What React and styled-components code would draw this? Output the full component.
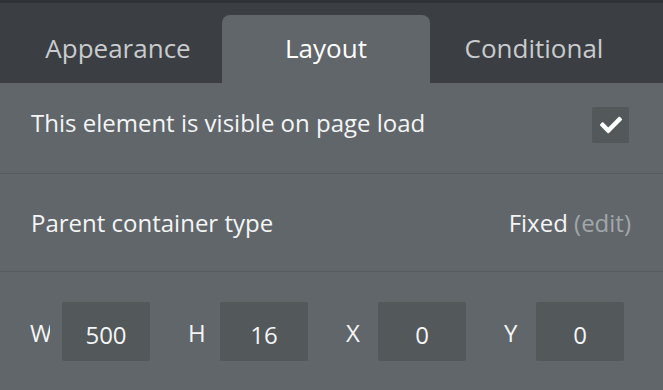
import styled, { createGlobalStyle } from "styled-components";
import { FaCheck } from "react-icons/fa";

const Global = createGlobalStyle`
  body { margin: 0; background: #61666a; font-family: "Open Sans", "Noto Sans", sans-serif; }
`;

const tabs = ["Appearance", "Layout", "Conditional"];
const dims = [
  { label: "W", value: "500" },
  { label: "H", value: "16" },
  { label: "X", value: "0" },
  { label: "Y", value: "0" },
];

function App() {
  return (
    <Panel>
      <Global />
      <TabBar>
        {tabs.map((t) => (
          <Tab key={t} $active={t === "Layout"}>{t}</Tab>
        ))}
      </TabBar>
      <Row $h={91} $lift={12}>
        <Label>This element is visible on page load</Label>
        <CheckBox><FaCheck size={22} /></CheckBox>
      </Row>
      <Row $h={98}>
        <Label>Parent container type</Label>
        <Value>Fixed <Edit>(edit)</Edit></Value>
      </Row>
      <DimRow>
        {dims.map((d) => (
          <DimGroup key={d.label}>
            <DimLabel>{d.label}</DimLabel>
            <DimInput>{d.value}</DimInput>
          </DimGroup>
        ))}
      </DimRow>
    </Panel>
  );
}

const Panel = styled.div`
  width: 663px; height: 390px;
  overflow: hidden;
  background: #61666a;
  color: #f4f5f5;
`;

const TabBar = styled.div`
  height: 80px;
  background: #3b3f43;
  border-top: 3px solid #2f3337;
  display: flex;
  align-items: flex-end;
  padding-left: 14px;
`;

const Tab = styled.div`
  width: 208px; height: 68px;
  display: flex;
  justify-content: center;
  align-items: center;
  padding-bottom: 2px;
  box-sizing: border-box;
  font-size: 26px;
  border-radius: 8px 8px 0 0;
  background: ${(p) => (p.$active ? "#61666a" : "transparent")};
  color: ${(p) => (p.$active ? "#ffffff" : "#c9cbcd")};
`;

const Row = styled.div`
  height: ${(p) => p.$h}px;
  box-sizing: border-box;
  border-bottom: 1px solid #575b5f;
  display: flex;
  align-items: center;
  justify-content: space-between;
  padding: 0 34px ${(p) => p.$lift || 0}px 31px;
`;

const Label = styled.div`
  font-size: 24px;
`;

const CheckBox = styled.div`
  width: 37px; height: 36px;
  border-radius: 2px;
  background: #53585b;
  color: #ffffff;
  display: flex;
  justify-content: center;
  align-items: center;
  margin-top: 5px;
`;

const Value = styled.div`
  font-size: 24px;
  margin-right: -2px;
`;

const Edit = styled.span`
  color: #a3a7aa;
`;

const DimRow = styled.div`
  display: flex;
  padding: 30px 0 0 30px;
`;

const DimGroup = styled.div`
  display: flex;
  align-items: center;
  margin-right: 38px;
`;

const DimLabel = styled.div`
  width: 20px;
  overflow: hidden;
  margin-right: 12px;
  font-size: 24px;
  margin-top: 2px;
`;

const DimInput = styled.div`
  width: 88px; height: 59px;
  border-radius: 2px;
  background: #53585b;
  display: flex;
  justify-content: center;
  align-items: center;
  font-size: 24px;
  padding-top: 6px;
  box-sizing: border-box;
`;

export default App;
